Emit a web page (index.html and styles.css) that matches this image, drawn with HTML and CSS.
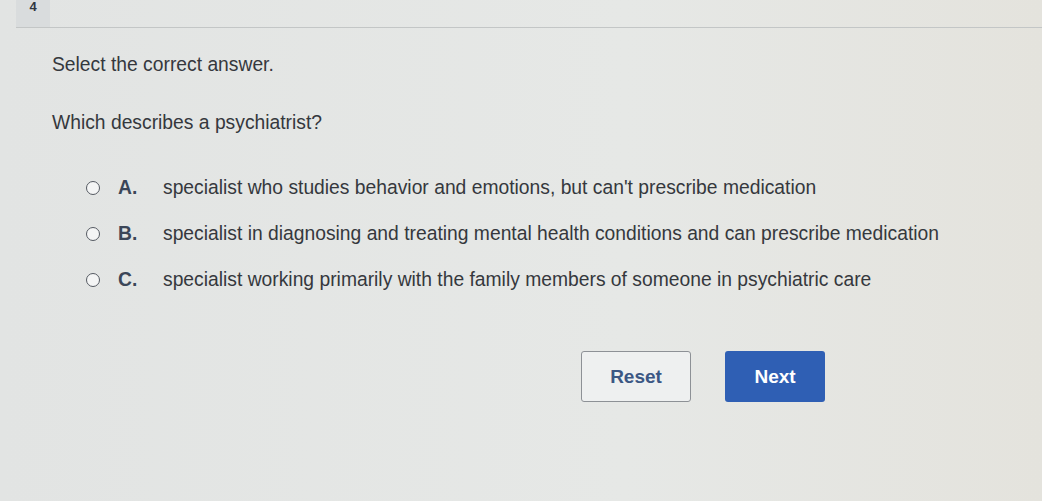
FILE: index.html
```html
<!DOCTYPE html>
<html lang="en">
<head>
  <meta charset="UTF-8" />
  <title>Question 4</title>
  <link rel="stylesheet" href="styles.css">
</head>
<body>

<!-- ===== Question header ===== -->
<div class="q-head">
  <div class="q-num">4</div>
</div>

<!-- ===== Question body ===== -->
<div class="q-body">
  <p class="prompt">Select the correct answer.</p>
  <p class="stem">Which describes a psychiatrist?</p>

  <div class="choices">
    <label class="choice"><span class="radio"></span><b>A.</b><span>specialist who studies behavior and emotions, but can't prescribe medication</span></label>
    <label class="choice"><span class="radio"></span><b>B.</b><span>specialist in diagnosing and treating mental health conditions and can prescribe medication</span></label>
    <label class="choice"><span class="radio"></span><b>C.</b><span>specialist working primarily with the family members of someone in psychiatric care</span></label>
  </div>

  <div class="actions">
    <button class="btn reset-btn">Reset</button>
    <button class="btn next-btn">Next</button>
  </div>
</div>

</body>
</html>
```

FILE: styles.css
```css
* { box-sizing:border-box; margin:0; padding:0; }
body {
  font-family:"Liberation Sans",Arial,sans-serif; color:#35383d;
  background:linear-gradient(to right,#e2e4e3,#e6e8e6 60%,#e4e3dd);
  height:501px; overflow:hidden;
}

.q-head{ height:28px; border-bottom:1px solid #c3c6c6; margin-left:16px; }
.q-num{
  width:34px; height:27px; background:#d9dcdd; text-align:center;
  font-size:13px; font-weight:bold; color:#2e3540; line-height:14px;
}

.q-body{ padding-left:52px; font-size:19.3px; line-height:22px; }
.prompt{ margin-top:26px; }
.stem{ margin-top:36px; }

.choices{ margin-top:43px; margin-left:34px; display:grid; gap:24px; }
.choice{ display:flex; align-items:center; height:22px; }
.radio{
  width:14px; height:14px; border:1.6px solid #555a62; border-radius:50%;
  background:#f4f5f5; margin-right:18px;
}
.choice b{ width:45px; color:#3b4658; }

.actions{ display:flex; gap:34px; margin-top:60px; padding-left:529px; }
.btn{
  height:51px; font-family:inherit; font-size:19px; font-weight:bold; border-radius:3px; cursor:pointer;
}
.reset-btn{ width:110px; background:#eef0f0; border:1.5px solid #8d9196; color:#3b5784; }
.next-btn{ width:100px; background:#2f5fb4; border:none; color:#fff; }
```
